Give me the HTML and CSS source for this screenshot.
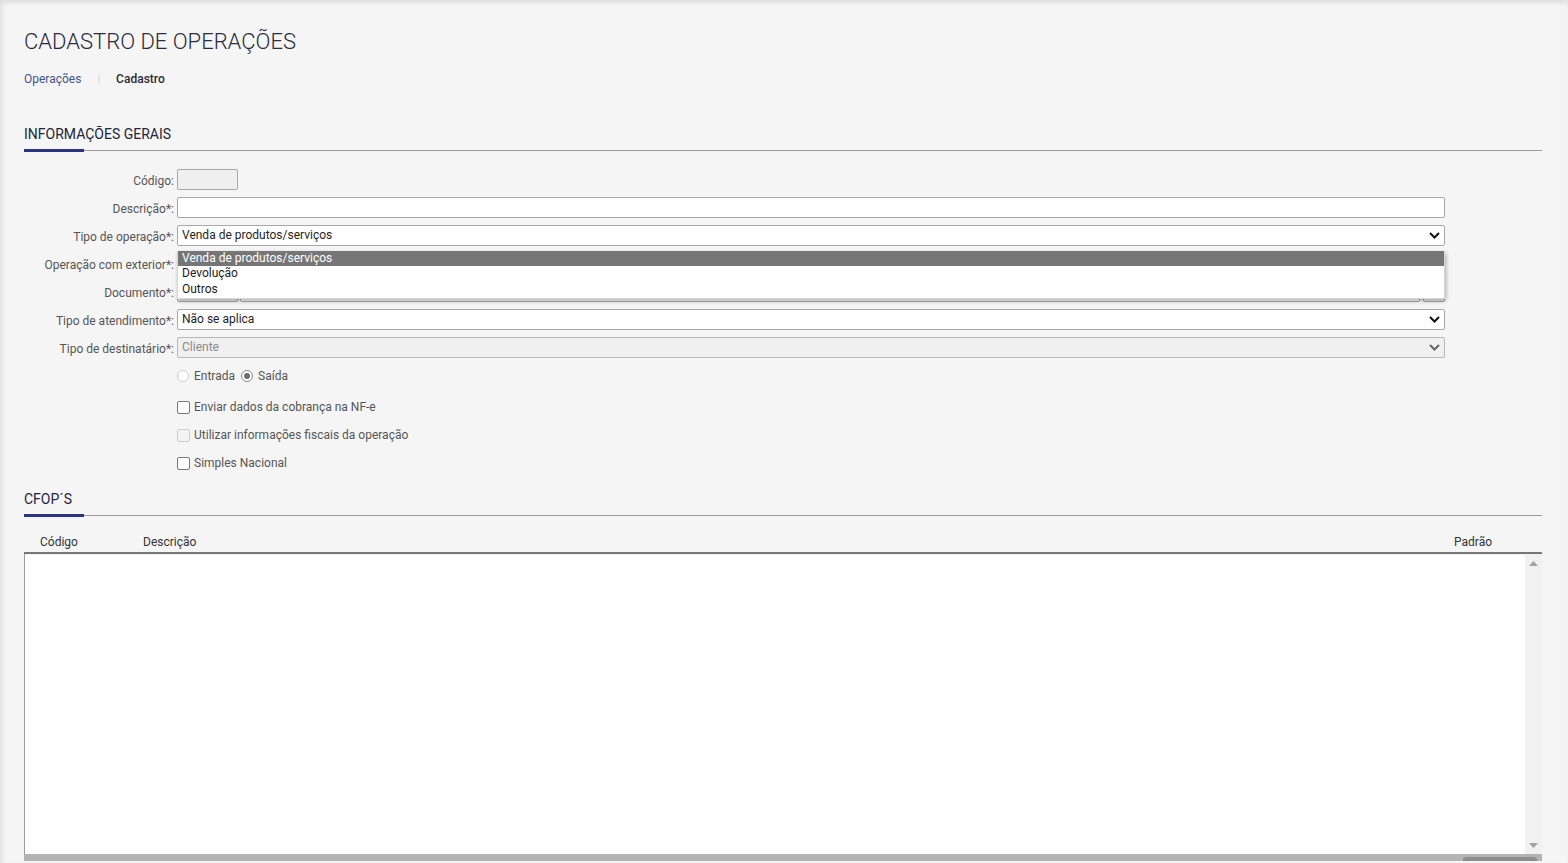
FILE: index.html
```html
<!DOCTYPE html>
<html lang="pt-BR">
<head>
<meta charset="utf-8">
<title>Cadastro de Operações</title>
<link rel="stylesheet" href="styles.css">
</head>
<body>
<div class="page">
  <h1 class="title">CADASTRO DE OPERAÇÕES</h1>
  <nav class="crumbs">
    <a class="crumb-link">Operações</a>
    <span class="crumb-sep">|</span>
    <span class="crumb-current">Cadastro</span>
  </nav>

  <h2 class="section">INFORMAÇÕES GERAIS</h2>

  <div class="form">
    <div class="row">
      <label class="lbl">Código:</label>
      <div class="ctrl"><div class="input input-code"></div></div>
    </div>
    <div class="row">
      <label class="lbl">Descrição*:</label>
      <div class="ctrl"><div class="input input-full"></div></div>
    </div>
    <div class="row">
      <label class="lbl">Tipo de operação*:</label>
      <div class="ctrl">
        <div class="select">
          <span>Venda de produtos/serviços</span>
          <svg class="chev" width="11" height="7" viewBox="0 0 11 7"><path d="M1 1l4.5 4.5L10 1" fill="none" stroke="#111" stroke-width="2"/></svg>
          <ul class="dropdown">
            <li class="opt opt-active">Venda de produtos/serviços</li>
            <li class="opt">Devolução</li>
            <li class="opt">Outros</li>
          </ul>
        </div>
      </div>
    </div>
    <div class="row">
      <label class="lbl">Operação com exterior*:</label>
      <div class="ctrl">
        <div class="select">
          <span></span>
          <svg class="chev" width="11" height="7" viewBox="0 0 11 7"><path d="M1 1l4.5 4.5L10 1" fill="none" stroke="#111" stroke-width="2"/></svg>
        </div>
      </div>
    </div>
    <div class="row">
      <label class="lbl">Documento*:</label>
      <div class="ctrl doc">
        <div class="input input-code"></div>
        <div class="input doc-name"></div>
        <div class="doc-btn"></div>
      </div>
    </div>
    <div class="row">
      <label class="lbl">Tipo de atendimento*:</label>
      <div class="ctrl">
        <div class="select">
          <span>Não se aplica</span>
          <svg class="chev" width="11" height="7" viewBox="0 0 11 7"><path d="M1 1l4.5 4.5L10 1" fill="none" stroke="#111" stroke-width="2"/></svg>
        </div>
      </div>
    </div>
    <div class="row">
      <label class="lbl">Tipo de destinatário*:</label>
      <div class="ctrl">
        <div class="select select-disabled">
          <span>Cliente</span>
          <svg class="chev" width="11" height="7" viewBox="0 0 11 7"><path d="M1 1l4.5 4.5L10 1" fill="none" stroke="#666" stroke-width="2"/></svg>
        </div>
      </div>
    </div>
    <div class="row">
      <span class="lbl"></span>
      <div class="opts">
        <span class="radio radio-off"></span><span class="opt-text">Entrada</span>
        <span class="radio radio-on"></span><span class="opt-text">Saída</span>
      </div>
    </div>
    <div class="row row-check-first">
      <span class="lbl"></span>
      <div class="opts">
        <span class="check"></span><span class="opt-text check-text">Enviar dados da cobrança na NF-e</span>
      </div>
    </div>
    <div class="row">
      <span class="lbl"></span>
      <div class="opts">
        <span class="check check-disabled"></span><span class="opt-text check-text">Utilizar informações fiscais da operação</span>
      </div>
    </div>
    <div class="row">
      <span class="lbl"></span>
      <div class="opts">
        <span class="check"></span><span class="opt-text check-text">Simples Nacional</span>
      </div>
    </div>
  </div>

  <h2 class="section section-2">CFOP´S</h2>

  <div class="table">
    <div class="thead">
      <span class="th th-code">Código</span>
      <span class="th th-desc">Descrição</span>
      <span class="th th-pad">Padrão</span>
    </div>
    <div class="tbody">
      <div class="tbody-area"></div>
      <div class="vscroll">
        <svg width="9" height="5" viewBox="0 0 9 5"><path d="M0 5L4.5 0L9 5z" fill="#a3a3a3"/></svg>
        <svg width="9" height="5" viewBox="0 0 9 5"><path d="M0 0L4.5 5L9 0z" fill="#a3a3a3"/></svg>
      </div>
    </div>
    <div class="hscroll"><div class="hthumb"></div></div>
  </div>
</div>
</body>
</html>
```
FILE: styles.css
```css
html, body {
  margin: 0;
  padding: 0;
  height: 100%;
  overflow: hidden;
}
body {
  background: #f5f5f5;
  font-family: Roboto, "Liberation Sans", Arial, sans-serif;
  color: #333;
}
.page {
  height: 863px;
  box-sizing: border-box;
  padding: 29px 26px 0 24px;
  box-shadow: inset 2px 3px 5px rgba(0, 0, 0, 0.09);
}
.title {
  margin: 0;
  font-size: 22px;
  line-height: 26px;
  font-weight: 300;
  color: #2a2c3a;
  letter-spacing: 0;
}
.crumbs {
  margin-top: 16px;
  display: flex;
  align-items: center;
  font-size: 12px;
  line-height: 16px;
}
.crumb-link {
  color: #46558a;
}
.crumb-sep {
  color: #d4d4d4;
  margin: 0 16px 0 16px;
  font-size: 11px;
}
.crumb-current {
  color: #2b2b33;
  font-weight: 500;
}
.section {
  position: relative;
  margin: 38px 0 0;
  padding-bottom: 7px;
  font-size: 14px;
  line-height: 18px;
  font-weight: 400;
  color: #23253a;
  border-bottom: 1px solid #9a9a9a;
}
.section::after {
  content: "";
  position: absolute;
  left: 0;
  bottom: -2px;
  width: 60px;
  height: 3px;
  background: #2b3480;
}
.section-2 {
  margin-top: 13px;
}
.form {
  margin-top: 15px;
  display: flex;
  flex-direction: column;
}
.row {
  display: grid;
  grid-template-columns: 150px 1268px;
  column-gap: 3px;
  height: 28px;
  align-items: center;
}
.row-check-first {
  margin-top: 3px;
}
.lbl {
  text-align: right;
  font-size: 12px;
  color: #555;
  white-space: nowrap;
  padding-top: 2px;
}
.ctrl {
  display: flex;
  align-items: center;
  padding-bottom: 2px;
}
.input {
  height: 21px;
  box-sizing: border-box;
  border: 1px solid #a8a8a8;
  border-radius: 2px;
  background: #fff;
}
.input-code {
  width: 61px;
  background: #efefef;
}
.input-full {
  width: 100%;
}
.doc {
  gap: 2px;
}
.doc-name {
  flex: 1;
}
.doc-btn {
  width: 22px;
  height: 21px;
  box-sizing: border-box;
  border: 1px solid #a8a8a8;
  border-radius: 2px;
  background: #eee;
  margin-left: 1px;
}
.select {
  position: relative;
  width: 100%;
  height: 21px;
  box-sizing: border-box;
  border: 1px solid #a8a8a8;
  border-radius: 2px;
  background: #fff;
  display: flex;
  align-items: center;
  justify-content: space-between;
  padding: 0 4px 0 4px;
  font-size: 12px;
  color: #1f1f1f;
}
.select-disabled {
  background: #f0f0f0;
  color: #8a8a8a;
  border-color: #b8b8b8;
}
.dropdown {
  position: absolute;
  z-index: 5;
  top: 25px;
  left: -1px;
  right: -1px;
  margin: 0;
  padding: 0 0 1px;
  list-style: none;
  background: #fff;
  box-shadow: 1px 2px 4px rgba(0, 0, 0, 0.3);
  border: 1px solid #d8d8d8;
  border-top: 0;
}
.opt {
  height: 15.6px;
  line-height: 15px;
  padding: 0 4px;
  font-size: 12px;
  color: #1c1c1c;
}
.opt-active {
  background: #767676;
  color: #fff;
}
.opts {
  display: flex;
  align-items: center;
  font-size: 12px;
  color: #555;
}
.opt-text {
  margin-left: 5px;
  margin-right: 5px;
}
.check-text {
  margin-left: 4px;
}
.radio {
  width: 12px;
  height: 12px;
  box-sizing: border-box;
  border-radius: 50%;
  border: 1px solid #cfcfcf;
  background: #fff;
  position: relative;
}
.radio-on {
  border-color: #8a8a8a;
  margin-left: 1px;
}
.radio-on::after {
  content: "";
  position: absolute;
  left: 2px;
  top: 2px;
  width: 6px;
  height: 6px;
  border-radius: 50%;
  background: #6f6f6f;
}
.check {
  width: 13px;
  height: 13px;
  box-sizing: border-box;
  border: 1px solid #777;
  border-radius: 2px;
  background: #fff;
}
.check-disabled {
  border-color: #cdcdcd;
  background: #f3f3f3;
}
.table {
  display: flex;
  flex-direction: column;
}
.thead {
  height: 38px;
  box-sizing: border-box;
  display: flex;
  align-items: flex-end;
  padding: 0 0 2px 16px;
  border-bottom: 2px solid #777;
  font-size: 12px;
  line-height: 16px;
  color: #333;
}
.th-code {
  width: 103px;
}
.th-desc {
  flex: 1;
}
.th-pad {
  width: 88px;
}
.tbody {
  height: 300px;
  display: flex;
  background: #fff;
  border-left: 1px solid #9a9a9a;
}
.tbody-area {
  flex: 1;
  border-top: 1px solid #f0f0f0;
}
.vscroll {
  width: 17px;
  background: #f1f1f1;
  display: flex;
  flex-direction: column;
  align-items: center;
  justify-content: space-between;
  padding: 7px 0 6px;
  box-sizing: border-box;
}
.hscroll {
  height: 7px;
  background: #b3b3b3;
  display: flex;
  justify-content: flex-end;
  align-items: flex-end;
  padding-right: 5px;
}
.hthumb {
  width: 74px;
  height: 4px;
  background: #8d8d8d;
  border-radius: 3px 3px 0 0;
}
```
